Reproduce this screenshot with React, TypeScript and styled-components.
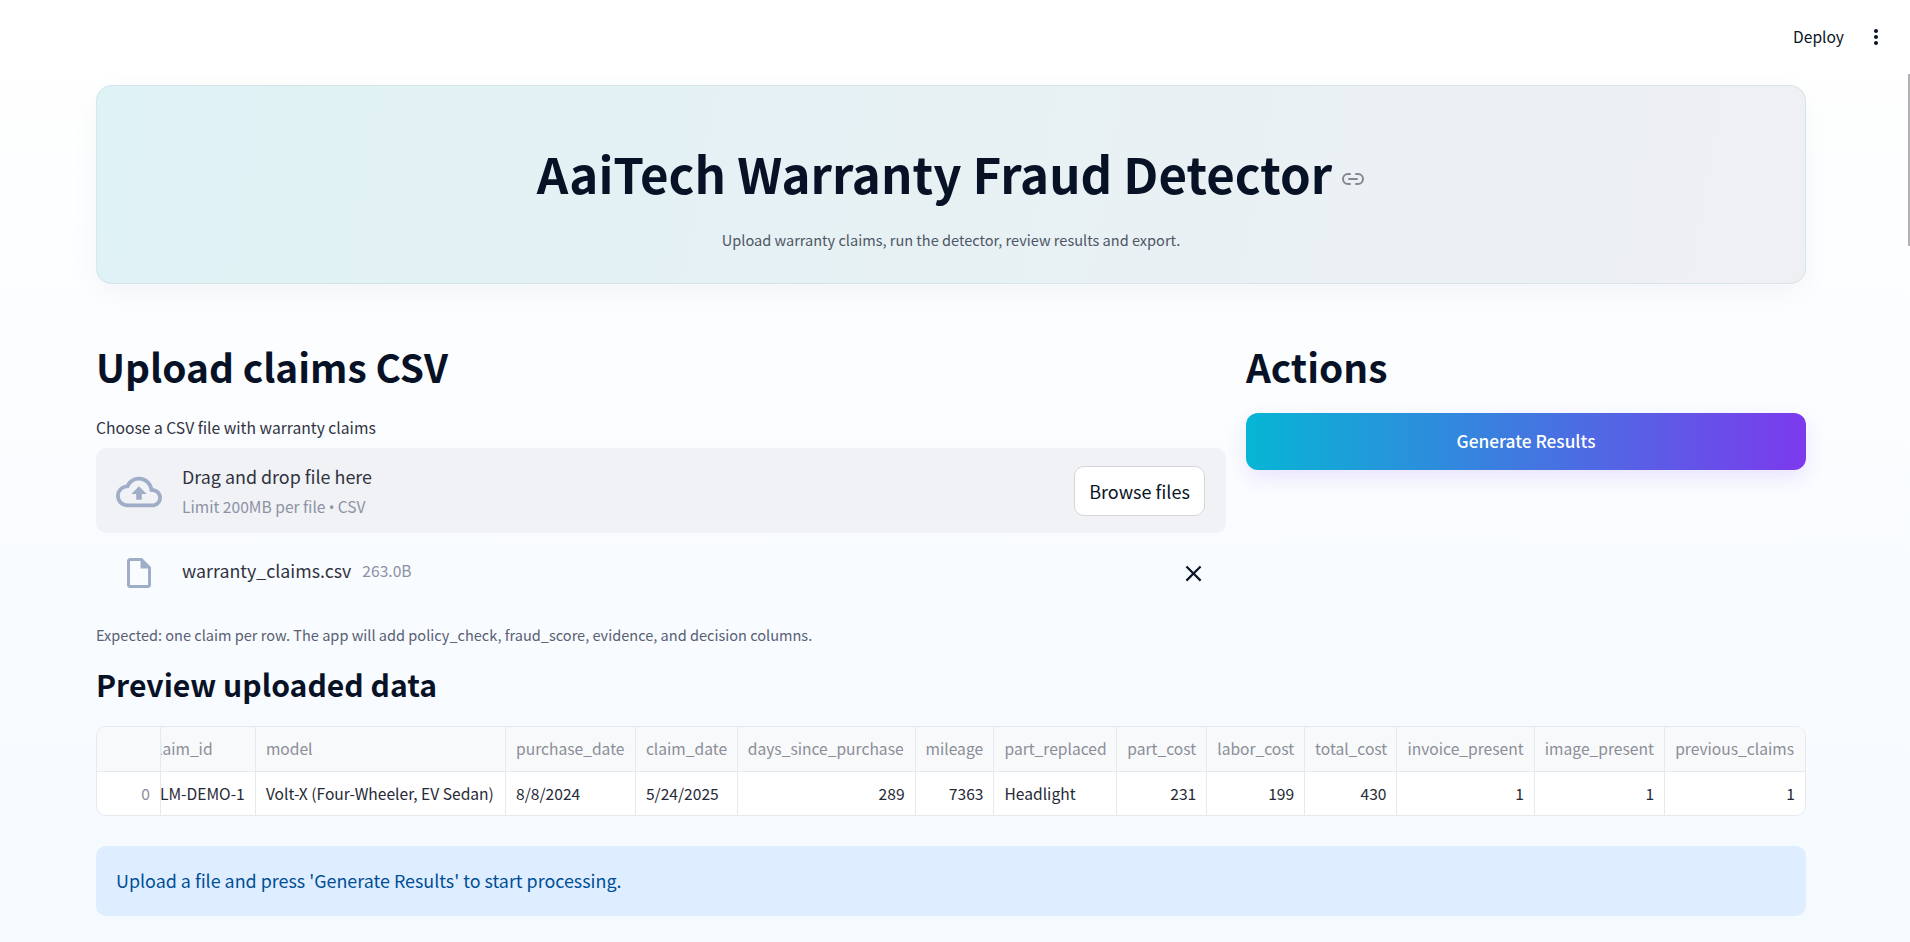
import React from "react";
import styled, { createGlobalStyle } from "styled-components";
import { LuLink2 } from "react-icons/lu";
import {
  MdClose,
  MdMoreVert,
  MdOutlineCloudUpload,
  MdOutlineInsertDriveFile,
} from "react-icons/md";

type Column = {
  name: string;
  width: number;
  value: string;
  numeric?: boolean;
  scrolled?: boolean;
};

const columns: Column[] = [
  { name: "claim_id", width: 95, value: "CLM-DEMO-1", scrolled: true },
  { name: "model", width: 250.5, value: "Volt-X (Four-Wheeler, EV Sedan)" },
  { name: "purchase_date", width: 130, value: "8/8/2024" },
  { name: "claim_date", width: 102, value: "5/24/2025" },
  { name: "days_since_purchase", width: 178, value: "289", numeric: true },
  { name: "mileage", width: 79, value: "7363", numeric: true },
  { name: "part_replaced", width: 123, value: "Headlight" },
  { name: "part_cost", width: 90, value: "231", numeric: true },
  { name: "labor_cost", width: 98, value: "199", numeric: true },
  { name: "total_cost", width: 92.5, value: "430", numeric: true },
  { name: "invoice_present", width: 137.5, value: "1", numeric: true },
  { name: "image_present", width: 130.5, value: "1", numeric: true },
  { name: "previous_claims", width: 140, value: "1", numeric: true },
];

const gridTemplate = `64px ${columns.map((c) => `${c.width}fr`).join(" ")}`;

export default function App(): React.ReactElement {
  return (
    <Page>
      <GlobalStyle />
      <Toolbar>
        <DeployLabel>Deploy</DeployLabel>
        <MenuButton>
          <MdMoreVert size={24} />
        </MenuButton>
      </Toolbar>
      <Content>
        <Hero>
          <TitleRow>
            <Title>AaiTech Warranty Fraud Detector</Title>
            <AnchorIcon>
              <LuLink2 size={24} />
            </AnchorIcon>
          </TitleRow>
          <Subtitle>
            Upload warranty claims, run the detector, review results and export.
          </Subtitle>
        </Hero>

        <Columns>
          <Column>
            <SectionHeading>Upload claims CSV</SectionHeading>
            <FieldLabel>Choose a CSV file with warranty claims</FieldLabel>
            <Dropzone>
              <CloudIcon>
                <MdOutlineCloudUpload size={46} />
              </CloudIcon>
              <DropText>
                <DropTitle>Drag and drop file here</DropTitle>
                <DropHint>
                  Limit 200MB per file <Bullet>•</Bullet> CSV
                </DropHint>
              </DropText>
              <BrowseButton>Browse files</BrowseButton>
            </Dropzone>
            <FileRow>
              <FileIcon>
                <MdOutlineInsertDriveFile size={36} />
              </FileIcon>
              <FileName>warranty_claims.csv</FileName>
              <FileSize>263.0B</FileSize>
              <RemoveButton>
                <MdClose size={27} />
              </RemoveButton>
            </FileRow>
            <Caption>
              Expected: one claim per row. The app will add policy_check,
              fraud_score, evidence, and decision columns.
            </Caption>
          </Column>
          <Column>
            <SectionHeading>Actions</SectionHeading>
            <GenerateButton>Generate Results</GenerateButton>
          </Column>
        </Columns>

        <SubHeading>Preview uploaded data</SubHeading>
        <Table>
          <HeaderCell />
          {columns.map((c) => (
            <HeaderCell key={c.name} $scrolled={c.scrolled}>
              <CellText $scrolled={c.scrolled}>{c.name}</CellText>
            </HeaderCell>
          ))}
          <IndexCell>0</IndexCell>
          {columns.map((c) => (
            <BodyCell key={c.name} $numeric={c.numeric} $scrolled={c.scrolled}>
              <CellText $scrolled={c.scrolled}>{c.value}</CellText>
            </BodyCell>
          ))}
        </Table>

        <InfoAlert>
          Upload a file and press 'Generate Results' to start processing.
        </InfoAlert>
      </Content>
      <ScrollThumb />
    </Page>
  );
}

const GlobalStyle = createGlobalStyle`
  html, body {
    margin: 0;
    padding: 0;
    height: 100%;
    overflow: hidden;
  }

  body {
    font-family: "Noto Sans CJK SC", "Noto Sans", "Liberation Sans", sans-serif;
    color: #31333f;
  }

  * {
    box-sizing: border-box;
  }
`;

const Page = styled.div`
  position: relative;
  height: 942px;
  overflow: hidden;
  background: linear-gradient(180deg, #ffffff 0%, #f5faff 100%);
`;

const Toolbar = styled.div`
  height: 74px;
  display: flex;
  align-items: center;
  justify-content: flex-end;
  padding-right: 22px;
  gap: 20px;
`;

const DeployLabel = styled.span`
  padding-bottom: 2px;
  font-size: 15.6px;
  color: #0b1526;
`;

const MenuButton = styled.span`
  display: flex;
  color: #0b1526;
`;

const Content = styled.main`
  padding: 11px 104px 0 96px;
`;

const Hero = styled.section`
  height: 199px;
  display: flex;
  flex-direction: column;
  align-items: center;
  justify-content: flex-start;
  padding-top: 49px;
  border: 1px solid rgba(190, 215, 220, 0.45);
  border-radius: 16px;
  background: linear-gradient(100deg, #dff2f5 0%, #eff0f3 100%);
  box-shadow: 0 10px 30px rgba(15, 23, 42, 0.04);
`;

const TitleRow = styled.div`
  display: flex;
  align-items: center;
  height: 76px;
`;

const Title = styled.h1`
  margin: 0;
  font-size: 49.2px;
  line-height: 76px;
  font-weight: 700;
  color: #081226;
`;

const AnchorIcon = styled.span`
  display: flex;
  margin: 11px 0 0 9px;
  color: #85888f;
`;

const Subtitle = styled.p`
  margin: 17px 0 0;
  font-size: 14.56px;
  line-height: 24px;
  color: #4f5666;
`;

const Columns = styled.div`
  display: grid;
  grid-template-columns: minmax(0, 1130fr) minmax(0, 560fr);
  gap: 20px;
  margin-top: 55px;
`;

const Column = styled.div`
  display: flex;
  flex-direction: column;
`;

const SectionHeading = styled.h2`
  margin: 0;
  height: 56px;
  font-size: 38.8px;
  line-height: 54px;
  font-weight: 600;
  color: #081226;
`;

const FieldLabel = styled.div`
  margin-top: 21px;
  height: 24px;
  font-size: 15.66px;
  line-height: 24px;
  color: #31333f;
`;

const Dropzone = styled.div`
  margin-top: 8px;
  height: 85px;
  display: flex;
  align-items: center;
  padding: 0 21px 0 20px;
  border-radius: 10px;
  background: #f0f2f6;
`;

const CloudIcon = styled.span`
  display: flex;
  margin-top: 2px;
  color: #9fadc9;
`;

const DropText = styled.div`
  flex: 1;
  display: flex;
  flex-direction: column;
  margin-left: 20px;
`;

const DropTitle = styled.span`
  font-size: 17.9px;
  line-height: 28px;
  color: #31333f;
`;

const DropHint = styled.span`
  margin-top: 4px;
  font-size: 15.6px;
  line-height: 24px;
  color: #8c92a3;
`;

const Bullet = styled.span`
  font-family: "Noto Sans", sans-serif;
  font-size: 14px;
`;

const BrowseButton = styled.button`
  width: 131px;
  height: 50px;
  padding: 0;
  border: 1px solid #d6d6d9;
  border-radius: 10px;
  background: #ffffff;
  font: inherit;
  font-size: 18px;
  color: #0b1526;
`;

const FileRow = styled.div`
  height: 76px;
  display: flex;
  align-items: center;
  padding: 0 19px 0 25px;
`;

const FileIcon = styled.span`
  display: flex;
  margin-top: 4px;
  color: #9fadc9;
`;

const FileName = styled.span`
  margin-left: 25px;
  margin-top: -2px;
  font-size: 17.8px;
  color: #31333f;
`;

const FileSize = styled.span`
  margin-left: 11px;
  margin-top: -2px;
  font-size: 15.6px;
  color: #8c92a3;
`;

const RemoveButton = styled.span`
  display: flex;
  margin: 4px 0 0 auto;
  color: #0b1526;
`;

const Caption = styled.p`
  margin: 14px 0 0;
  font-size: 14.55px;
  line-height: 24px;
  color: #586074;
`;

const GenerateButton = styled.button`
  margin-top: 18px;
  height: 57px;
  padding: 0 0 2px;
  border: none;
  border-radius: 12px;
  background: linear-gradient(90deg, #06b6d4 0%, #7c3aed 100%);
  box-shadow: 0 8px 20px rgba(124, 58, 237, 0.12);
  font: inherit;
  font-size: 17.3px;
  font-weight: 500;
  color: #ffffff;
`;

const SubHeading = styled.h3`
  margin: 15px 0 0;
  height: 44px;
  font-size: 30.15px;
  line-height: 44px;
  font-weight: 600;
  color: #081226;
`;

const Table = styled.div`
  margin-top: 20px;
  display: grid;
  grid-template-columns: ${gridTemplate};
  grid-template-rows: 45px 43px;
  border: 1px solid #e6e9ee;
  border-radius: 10px;
  overflow: hidden;
  background: #ffffff;
`;

const HeaderCell = styled.div<{ $scrolled?: boolean }>`
  display: flex;
  align-items: center;
  min-width: 0;
  overflow: hidden;
  padding: 0 ${({ $scrolled }) => ($scrolled ? "0" : "10px")} 2px;
  background: #f8f9fb;
  border-right: 1px solid #e6e9ee;
  border-bottom: 1px solid #e6e9ee;
  font-size: 15.6px;
  color: #8b8e97;

  &:nth-child(14) {
    border-right: none;
  }
`;

const BodyCell = styled.div<{ $numeric?: boolean; $scrolled?: boolean }>`
  display: flex;
  align-items: center;
  justify-content: ${({ $numeric }) => ($numeric ? "flex-end" : "flex-start")};
  min-width: 0;
  overflow: hidden;
  padding: 0 ${({ $scrolled }) => ($scrolled ? "0" : "10px")} 2px;
  border-right: 1px solid #e6e9ee;
  font-size: 15.6px;
  color: #262a36;

  &:last-child {
    border-right: none;
  }
`;

const IndexCell = styled(BodyCell)`
  justify-content: flex-end;
  color: #8b8e97;
`;

const CellText = styled.span<{ $scrolled?: boolean }>`
  flex: none;
  white-space: nowrap;
  margin-left: ${({ $scrolled }) => ($scrolled ? "-11px" : "0")};
`;

const InfoAlert = styled.div`
  margin-top: 30px;
  height: 70px;
  display: flex;
  align-items: center;
  padding: 0 0 2px 20px;
  border-radius: 10px;
  background: #deedff;
  font-size: 17.9px;
  color: #004f96;
`;

const ScrollThumb = styled.div`
  position: absolute;
  top: 74px;
  right: 0;
  width: 2px;
  height: 172px;
  background: #b2b2b6;
`;
